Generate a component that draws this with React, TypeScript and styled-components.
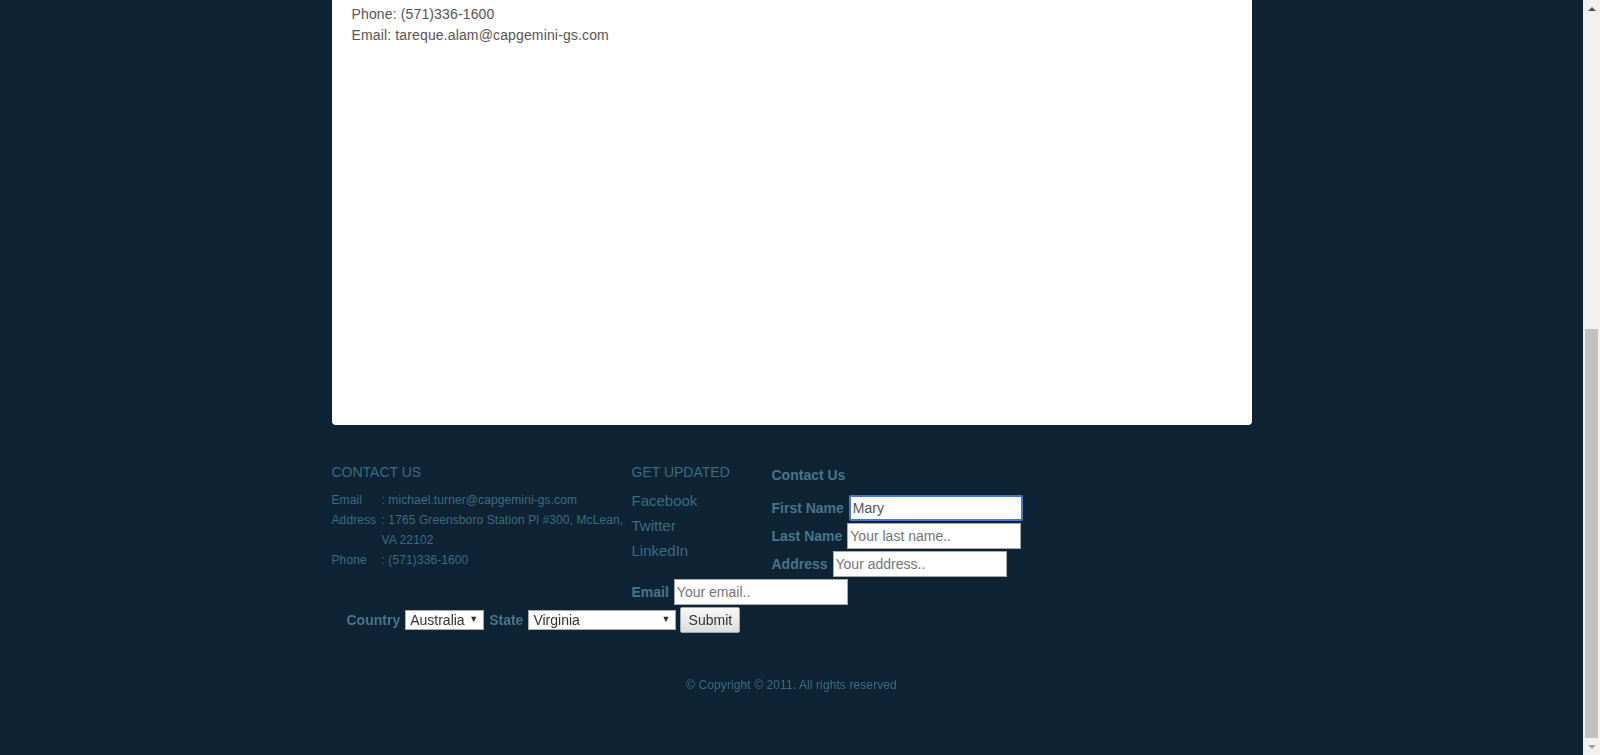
import styled, { createGlobalStyle } from "styled-components";

const GlobalStyle = createGlobalStyle`
  html, body {
    margin: 0;
    padding: 0;
    overflow: hidden;
  }
  body {
    font-family: "Liberation Sans", Arial, sans-serif;
  }
`;

const contactRows = [
  { label: "Email", value: ": michael.turner@capgemini-gs.com" },
  { label: "Address", value: ": 1765 Greensboro Station Pl #300, McLean, VA 22102" },
  { label: "Phone", value: ": (571)336-1600" },
];

const links = ["Facebook", "Twitter", "LinkedIn"];

export default function App() {
  return (
    <>
      <GlobalStyle />
      <Window>
        <Page>
          <Card>
            <CardLine>Phone: (571)336-1600</CardLine>
            <CardLine>Email: tareque.alam@capgemini-gs.com</CardLine>
          </Card>

          <Footer>
            <Columns>
              <ContactColumn>
                <Heading>CONTACT US</Heading>
                <InfoList>
                  {contactRows.map((row) => (
                    <InfoRow key={row.label}>
                      <InfoLabel>{row.label}</InfoLabel>
                      <InfoValue>{row.value}</InfoValue>
                    </InfoRow>
                  ))}
                </InfoList>
              </ContactColumn>

              <LinksColumn>
                <Heading>GET UPDATED</Heading>
                <LinkList>
                  {links.map((link) => (
                    <FooterLink key={link} href="#">
                      {link}
                    </FooterLink>
                  ))}
                </LinkList>
              </LinksColumn>

              <FormColumn>
                <FormTitle>Contact Us</FormTitle>
                <FieldRows>
                  <Field>
                    <Label>First Name</Label>
                    <TextInput $focused $width={174} defaultValue="Mary" autoFocus />
                  </Field>
                  <Field>
                    <Label>Last Name</Label>
                    <TextInput $width={174} placeholder="Your last name.." />
                  </Field>
                  <Field>
                    <Label>Address</Label>
                    <TextInput $width={174} placeholder="Your address.." />
                  </Field>
                </FieldRows>
              </FormColumn>
            </Columns>

            <Field $indent={300} $top={2}>
              <Label>Email</Label>
              <TextInput $width={174} placeholder="Your email.." />
            </Field>

            <Field $indent={15} $top={2}>
              <Label>Country</Label>
              <SelectWrap $width={79}>
                <Select defaultValue="australia">
                  <option value="australia">Australia</option>
                  <option value="canada">Canada</option>
                  <option value="usa">USA</option>
                </Select>
              </SelectWrap>
              <Label>State</Label>
              <SelectWrap $width={148}>
                <Select defaultValue="virginia">
                  <option value="virginia">Virginia</option>
                  <option value="maryland">Maryland</option>
                </Select>
              </SelectWrap>
              <SubmitButton type="button">Submit</SubmitButton>
            </Field>

            <Copyright>© Copyright © 2011. All rights reserved</Copyright>
          </Footer>
        </Page>

        <Scrollbar>
          <ScrollArrow $up />
          <Track>
            <Thumb />
          </Track>
          <ScrollArrow />
        </Scrollbar>
      </Window>
    </>
  );
}

const Window = styled.div`
  display: flex;
  width: 1600px;
  height: 755px;
  overflow: hidden;
`;

const Page = styled.div`
  flex: 1;
  display: flex;
  flex-direction: column;
  align-items: center;
  background-color: #0e2434;
`;

const Card = styled.div`
  box-sizing: border-box;
  width: 920px;
  height: 425px;
  padding: 4px 20px;
  background-color: #ffffff;
  border-radius: 0 0 4px 4px;
`;

const CardLine = styled.div`
  font-size: 14px;
  line-height: 21px;
  letter-spacing: 0.14px;
  color: #555555;
`;

const Footer = styled.div`
  width: 920px;
  padding-top: 37px;
  display: flex;
  flex-direction: column;
`;

const Columns = styled.div`
  display: flex;
  align-items: flex-start;
`;

const ContactColumn = styled.div`
  width: 300px;
`;

const LinksColumn = styled.div`
  width: 140px;
`;

const FormColumn = styled.div`
  padding-top: 3px;
`;

const Heading = styled.div`
  font-size: 14px;
  line-height: 20px;
  color: #3e6a80;
  text-transform: uppercase;
`;

const InfoList = styled.div`
  margin-top: 8px;
  display: flex;
  flex-direction: column;
`;

const InfoRow = styled.div`
  display: flex;
  font-size: 12px;
  line-height: 20px;
  letter-spacing: 0.1px;
  color: #3e6a80;
`;

const InfoLabel = styled.div`
  width: 50px;
  flex-shrink: 0;
`;

const InfoValue = styled.div`
  width: 245px;
`;

const LinkList = styled.div`
  margin-top: 6px;
  display: flex;
  flex-direction: column;
`;

const FooterLink = styled.a`
  font-size: 15px;
  line-height: 25px;
  color: #3e6a80;
  text-decoration: none;
`;

const FormTitle = styled.div`
  font-size: 14px;
  font-weight: bold;
  line-height: 20px;
  color: #4a7489;
`;

const FieldRows = styled.div`
  margin-top: 10px;
  display: flex;
  flex-direction: column;
  gap: 2px;
`;

const Field = styled.div<{ $indent?: number; $top?: number }>`
  display: flex;
  align-items: center;
  gap: 5px;
  padding-left: ${(p) => p.$indent ?? 0}px;
  margin-top: ${(p) => p.$top ?? 0}px;
`;

const Label = styled.label`
  font-size: 14px;
  font-weight: bold;
  color: #4a7489;
  white-space: nowrap;
`;

const TextInput = styled.input<{ $focused?: boolean; $width: number }>`
  box-sizing: border-box;
  width: ${(p) => p.$width}px;
  height: 26px;
  padding: 0 2px;
  font-family: "Liberation Sans", Arial, sans-serif;
  font-size: 14px;
  color: #555555;
  background: #ffffff;
  border: ${(p) => (p.$focused ? "2px solid #4a78c8" : "1px solid #a9a9a9")};
  border-radius: ${(p) => (p.$focused ? "2px" : "0")};
  outline: none;

  &::placeholder {
    color: #757575;
  }
`;

const SelectWrap = styled.span<{ $width: number }>`
  position: relative;
  display: inline-flex;
  width: ${(p) => p.$width}px;

  &::after {
    content: "▼";
    position: absolute;
    right: 6px;
    top: 4px;
    font-size: 9px;
    color: #333333;
    pointer-events: none;
  }
`;

const Select = styled.select`
  appearance: none;
  box-sizing: border-box;
  width: 100%;
  height: 20px;
  padding: 0 4px;
  font-family: "Liberation Sans", Arial, sans-serif;
  font-size: 14px;
  color: #333333;
  background: #ffffff;
  border: 1px solid #a9a9a9;
  border-radius: 0;
  outline: none;
`;

const SubmitButton = styled.button`
  box-sizing: border-box;
  width: 60px;
  height: 26px;
  margin-left: -1px;
  font-family: "Liberation Sans", Arial, sans-serif;
  font-size: 14px;
  color: #333333;
  background: linear-gradient(#f7f7f7, #dddddd);
  border: 1px solid #a6a6a6;
  border-radius: 2px;
`;

const Copyright = styled.div`
  margin-top: 44px;
  font-size: 12px;
  line-height: 16px;
  letter-spacing: 0.1px;
  text-align: center;
  color: #3e6a80;
`;

const Scrollbar = styled.div`
  width: 17px;
  display: flex;
  flex-direction: column;
  background-color: #f1f1f1;
`;

const ScrollArrow = styled.div<{ $up?: boolean }>`
  height: 17px;
  display: flex;
  align-items: center;
  justify-content: center;

  &::before {
    content: "";
    width: 0;
    height: 0;
    border-left: 4px solid transparent;
    border-right: 4px solid transparent;
    ${(p) =>
      p.$up
        ? "border-bottom: 4px solid #505050;"
        : "border-top: 4px solid #a3a3a3;"}
  }
`;

const Track = styled.div`
  flex: 1;
  display: flex;
  flex-direction: column;
  justify-content: flex-end;
  padding: 0 2px;
`;

const Thumb = styled.div`
  height: 409px;
  background-color: #c1c1c1;
`;
